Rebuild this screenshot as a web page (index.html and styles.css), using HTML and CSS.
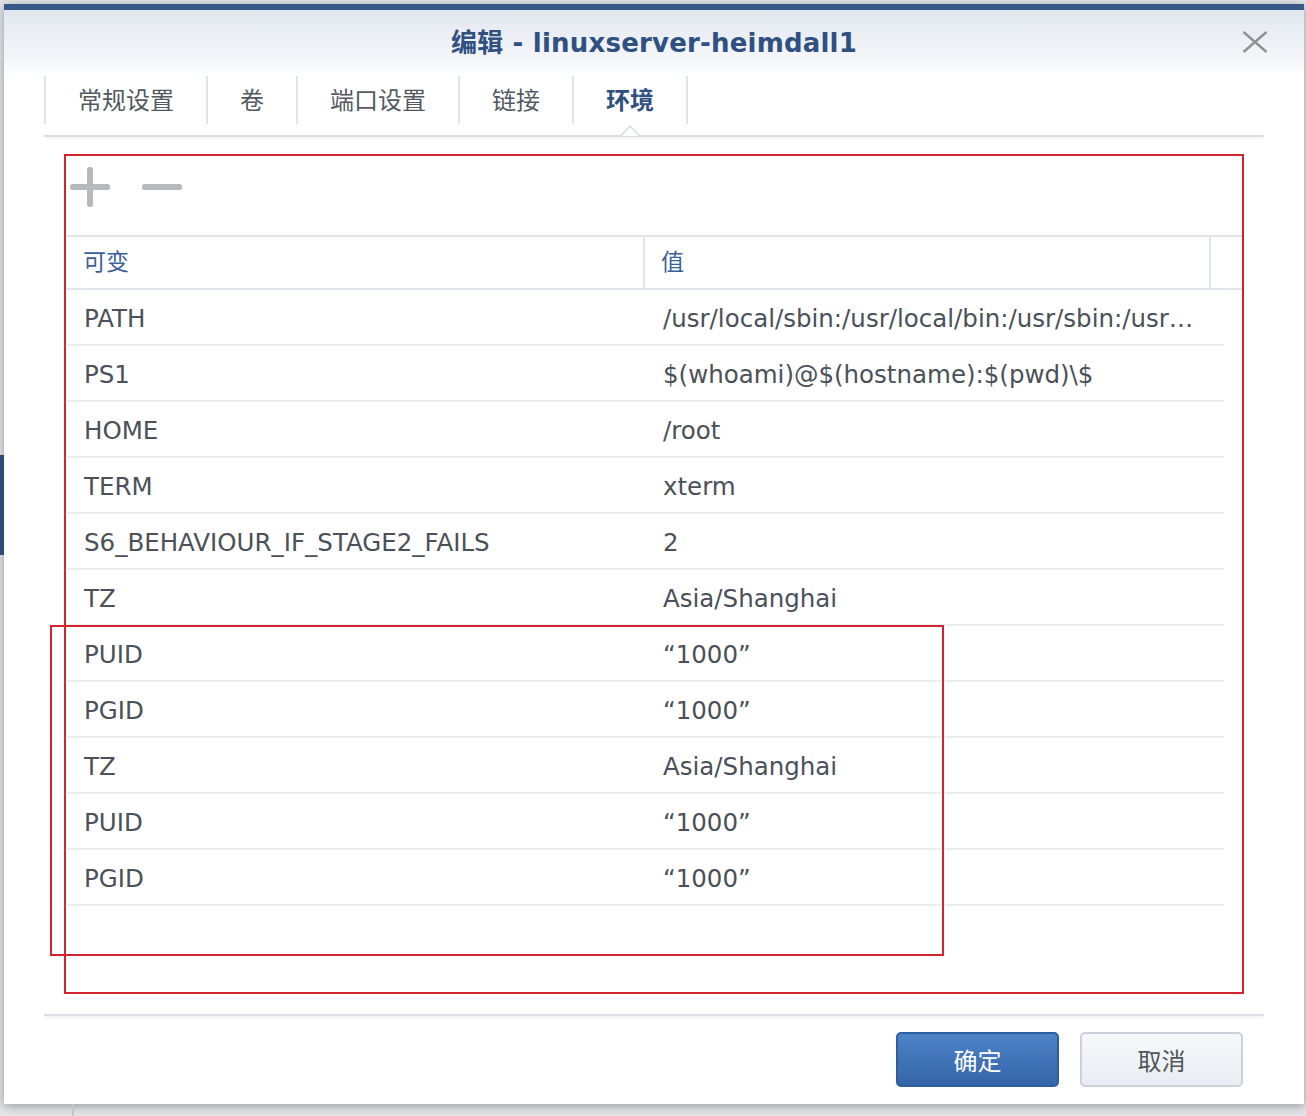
FILE: index.html
```html
<!DOCTYPE html>
<html lang="zh-CN">
<head>
<meta charset="utf-8">
<title>编辑 - linuxserver-heimdall1</title>
<link rel="stylesheet" href="styles.css">
</head>
<body>
<div class="desk-bar"></div>
<div class="desk-line"></div>
<div class="dialog">
  <div class="titlebar">
    <div></div>
    <div class="title">编辑 - linuxserver-heimdall1</div>
    <button class="close" aria-label="关闭">
      <svg width="26" height="22" viewBox="0 0 26 22"><path d="M1.5 1 L24.5 21 M24.5 1 L1.5 21" stroke="#8d9094" stroke-width="2.4" fill="none"/></svg>
    </button>
  </div>
  <div class="tabbar">
    <div class="tab">常规设置</div>
    <div class="tab">卷</div>
    <div class="tab">端口设置</div>
    <div class="tab">链接</div>
    <div class="tab active">环境</div>
  </div>
  <div class="content">
    <div class="panel">
      <div class="toolbar">
        <svg class="tool" width="40" height="40" viewBox="0 0 40 40"><rect x="0" y="17" width="40" height="6" rx="2.5" fill="#b6babe"/><rect x="17" y="0" width="6" height="40" rx="2.5" fill="#b6babe"/></svg>
        <svg class="tool minus" width="40" height="40" viewBox="0 0 40 40"><rect x="0" y="17" width="40" height="6" rx="2.5" fill="#b6babe"/></svg>
      </div>
      <div class="grid-head">
        <div class="hcell">可变</div>
        <div class="hcell">值</div>
        <div class="hcell last"></div>
      </div>
      <div class="rows">
        <div class="row"><div class="cell">PATH</div><div class="cell val">/usr/local/sbin:/usr/local/bin:/usr/sbin:/usr…</div></div>
        <div class="row"><div class="cell">PS1</div><div class="cell val">$(whoami)@$(hostname):$(pwd)\$</div></div>
        <div class="row"><div class="cell">HOME</div><div class="cell val">/root</div></div>
        <div class="row"><div class="cell">TERM</div><div class="cell val">xterm</div></div>
        <div class="row"><div class="cell">S6_BEHAVIOUR_IF_STAGE2_FAILS</div><div class="cell val">2</div></div>
        <div class="row"><div class="cell">TZ</div><div class="cell val">Asia/Shanghai</div></div>
        <div class="row"><div class="cell">PUID</div><div class="cell val">“1000”</div></div>
        <div class="row"><div class="cell">PGID</div><div class="cell val">“1000”</div></div>
        <div class="row"><div class="cell">TZ</div><div class="cell val">Asia/Shanghai</div></div>
        <div class="row"><div class="cell">PUID</div><div class="cell val">“1000”</div></div>
        <div class="row"><div class="cell">PGID</div><div class="cell val">“1000”</div></div>
      </div>
    </div>
  </div>
  <div class="footer">
    <button class="btn primary">确定</button>
    <button class="btn">取消</button>
  </div>
</div>
<div class="mark"></div>
</body>
</html>
```
FILE: styles.css
```css
html, body {
  margin: 0;
  padding: 0;
}
body {
  width: 1306px;
  height: 1116px;
  overflow: hidden;
  position: relative;
  background: #e4e6e9;
  box-sizing: border-box;
  padding: 4px 0 0 4px;
  font-family: "DejaVu Sans", "Noto Sans CJK SC", sans-serif;
}
.desk-bar {
  position: absolute;
  left: 0;
  top: 455px;
  width: 4px;
  height: 100px;
  background: #2f4b77;
}
.desk-line {
  position: absolute;
  left: 72px;
  top: 1104px;
  width: 2px;
  height: 12px;
  background: #c4c6c9;
}
.dialog {
  width: 1300px;
  height: 1100px;
  box-sizing: border-box;
  background: #fff;
  border-top: 6px solid #36598a;
  box-shadow: 0 2px 10px rgba(0, 0, 0, 0.35);
  display: flex;
  flex-direction: column;
}
.titlebar {
  height: 66px;
  flex: none;
  display: grid;
  grid-template-columns: 1fr auto 1fr;
  align-items: center;
  background: linear-gradient(#e2e7ef, #f4f6f9 75%, #ffffff);
}
.title {
  font-size: 26px;
  font-weight: bold;
  color: #2f5081;
  letter-spacing: 0.2px;
  padding-bottom: 6px;
}
.close {
  justify-self: end;
  margin-right: 36px;
  margin-bottom: 3px;
  width: 26px;
  height: 22px;
  padding: 0;
  border: none;
  background: none;
  display: flex;
}
.tabbar {
  flex: none;
  margin: 0 40px;
  height: 59px;
  border-bottom: 2px solid #dbdee2;
  box-shadow: 0 3px 3px -1px rgba(0, 0, 0, 0.06);
  display: flex;
  align-items: flex-start;
}
.tab {
  height: 48px;
  box-sizing: border-box;
  padding: 0 32px 3px;
  border-left: 2px solid #dde5ee;
  display: flex;
  align-items: center;
  font-family: "Noto Sans CJK SC", sans-serif;
  font-size: 24px;
  color: #535960;
  position: relative;
}
.tab:last-child {
  border-right: 2px solid #dde5ee;
}
.tab.active {
  color: #2f5081;
  font-weight: bold;
}
.tab.active::after {
  content: "";
  position: absolute;
  left: 50%;
  top: 52px;
  width: 16px;
  height: 16px;
  margin-left: -8px;
  background: #fff;
  border-top: 2px solid #dbdee2;
  border-left: 2px solid #dbdee2;
  box-sizing: border-box;
  transform: rotate(45deg);
  clip-path: polygon(0 0, 100% 0, 0 100%);
}
.content {
  flex: none;
  padding: 17px 60px 0;
}
.panel {
  height: 840px;
  box-sizing: border-box;
  border: 2px solid #d3232f;
  display: flex;
  flex-direction: column;
}
.toolbar {
  height: 79px;
  flex: none;
  box-sizing: border-box;
  padding: 11px 0 0 4px;
  display: flex;
  gap: 32px;
  align-items: flex-start;
}
.grid-head {
  flex: none;
  height: 55px;
  box-sizing: border-box;
  border-top: 2px solid #dee5ed;
  border-bottom: 2px solid #dee5ed;
  display: grid;
  grid-template-columns: 579px 566px 1fr;
}
.hcell {
  border-right: 2px solid #dee5ed;
  display: flex;
  align-items: center;
  padding: 0 0 5px 17px;
  font-family: "Noto Sans CJK SC", sans-serif;
  font-size: 23px;
  color: #3a6099;
}
.hcell:nth-child(2) {
  padding-left: 16px;
}
.hcell.last {
  border-right: none;
}
.rows {
  width: 1158px;
}
.row {
  height: 56px;
  box-sizing: border-box;
  border-bottom: 2px solid #ebeef1;
  display: grid;
  grid-template-columns: 579px 1fr;
}
.cell {
  padding: 2px 10px 0 18px;
  display: flex;
  align-items: center;
  font-size: 24.5px;
  color: #4b5158;
  white-space: nowrap;
  min-width: 0;
}
.footer {
  flex: none;
  margin: 20px 40px 0;
  border-top: 2px solid #dbdee2;
  box-shadow: inset 0 3px 3px -1px rgba(0, 0, 0, 0.05);
  padding: 16px 21px 0 0;
  display: flex;
  justify-content: flex-end;
  gap: 21px;
}
.btn {
  width: 163px;
  height: 55px;
  box-sizing: border-box;
  border-radius: 5px;
  border: 2px solid #c9d1db;
  background: linear-gradient(#f6f8fa, #e9edf2);
  font-family: "Noto Sans CJK SC", sans-serif;
  font-size: 24px;
  color: #50565d;
  padding: 0;
}
.btn.primary {
  border-color: #2f5e9e;
  background: linear-gradient(#4d83c7, #3465a8);
  color: #fff;
}
.mark {
  position: absolute;
  left: 50px;
  top: 625px;
  width: 894px;
  height: 331px;
  box-sizing: border-box;
  border: 2px solid #d3232f;
}
```
